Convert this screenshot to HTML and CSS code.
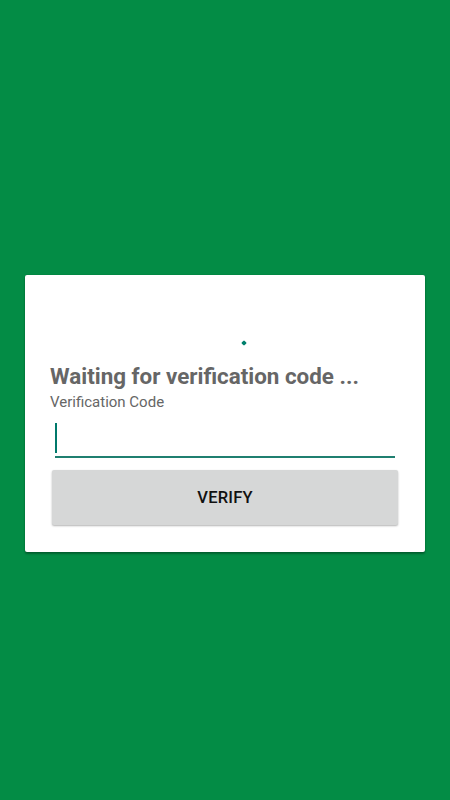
FILE: index.html
```html
<!DOCTYPE html>
<html lang="en">
<head>
<meta charset="utf-8">
<title>Verification</title>
<link rel="stylesheet" href="styles.css">
</head>
<body>
  <div class="card">
    <div class="spinner"><span class="dot"></span></div>
    <h1 class="title">Waiting for verification code ...</h1>
    <div class="label">Verification Code</div>
    <div class="field"><span class="cursor"></span></div>
    <button class="btn">VERIFY</button>
  </div>
</body>
</html>
```
FILE: styles.css
```css
html, body {
  margin: 0;
  padding: 0;
}
body {
  width: 450px;
  height: 800px;
  background: #038c45;
  font-family: Roboto, "Noto Sans", sans-serif;
  display: flex;
  flex-direction: column;
}
.card {
  margin: 275px 25px 0;
  width: 400px;
  height: 277px;
  box-sizing: border-box;
  background: #fff;
  border-radius: 2px;
  box-shadow: 0 0 1px rgba(0,0,0,.35), 0 2px 2px rgba(0,0,0,.3);
  padding: 0 25px;
  display: flex;
  flex-direction: column;
}
.spinner {
  height: 88px;
  padding-top: 66px;
  box-sizing: border-box;
}
.dot {
  display: block;
  width: 4px;
  height: 4px;
  margin-left: 192px;
  background: #00806d;
  transform: rotate(45deg);
  border-radius: 1px;
}
.title {
  margin: 0;
  font-size: 22.4px;
  line-height: 26px;
  font-weight: 700;
  color: #666666;
}
.label {
  margin-top: 4px;
  font-size: 15px;
  line-height: 18px;
  color: #666666;
}
.field {
  margin: 12px 5px 0;
  height: 35px;
  box-sizing: border-box;
  padding-bottom: 3px;
  border-bottom: 2px solid #1f7f70;
}
.cursor {
  display: block;
  width: 2px;
  height: 30px;
  background: #00796b;
}
.btn {
  margin: 12px 2px 0;
  width: 346px;
  height: 55px;
  border: none;
  border-radius: 2px;
  background: #d6d7d7;
  box-shadow: 0 1px 2px rgba(0,0,0,.3);
  font-family: Roboto, "Noto Sans", sans-serif;
  font-size: 16.5px;
  font-weight: 500;
  letter-spacing: 0.2px;
  color: #111;
  padding: 0;
}
```
